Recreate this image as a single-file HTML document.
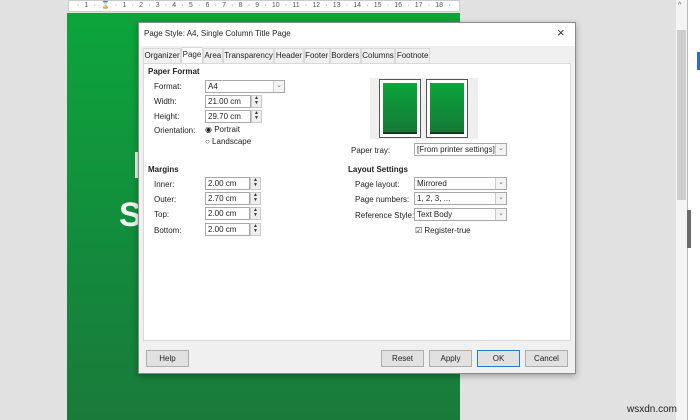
<!DOCTYPE html>
<html><head><meta charset="utf-8"><style>
*{box-sizing:border-box;margin:0;padding:0}
body{width:700px;height:420px;overflow:hidden;background:#e1e1e1;font-family:"Liberation Sans",sans-serif;font-size:8px;color:#222;position:relative}
.a{position:absolute;white-space:nowrap}
.in{position:absolute;background:#fff;border:1px solid #a8a8a8;height:13px;padding-left:2px;line-height:11px}
.sp{position:absolute;width:11px;height:13px;border:1px solid #c8c8c8;background:#eee;font-size:5px;line-height:5px;text-align:center;color:#333}
.dd{position:absolute;right:0;top:0;width:11px;height:11px;border-left:1px solid #ccc;background:#f3f3f3;color:#777;font-size:7px;text-align:center;line-height:10px}
.btn{position:absolute;top:350px;height:17px;width:43px;background:#e1e1e1;border:1px solid #adadad;text-align:center;line-height:15px}
b{font-weight:bold}
.tabs span{padding:0 0.5px;border:1px solid #d9d9d9;border-bottom:0}
</style></head><body>
<div class="a" style="left:68px;top:0;width:392px;height:12px;background:#fff;border:1px solid #ccc;font-size:7px;color:#555;line-height:10px;padding:0 8px;display:flex;justify-content:space-between"><span>·</span><span>1</span><span>·</span><span>⌛</span><span>·</span><span>1</span><span>·</span><span>2</span><span>·</span><span>3</span><span>·</span><span>4</span><span>·</span><span>5</span><span>·</span><span>6</span><span>·</span><span>7</span><span>·</span><span>8</span><span>·</span><span>9</span><span>·</span><span>10</span><span>·</span><span>11</span><span>·</span><span>12</span><span>·</span><span>13</span><span>·</span><span>14</span><span>·</span><span>15</span><span>·</span><span>16</span><span>·</span><span>17</span><span>·</span><span>18</span><span>·</span></div>
<div class="a" style="left:67px;top:13px;width:393px;height:407px;background:linear-gradient(#0ca53b,#138a3d 60%,#1a7a3a)"></div>
<div class="a" style="left:135px;top:152px;width:4px;height:26px;background:#e8f3ea"></div>
<div class="a" style="left:119px;top:196px;font-size:34px;font-weight:bold;color:#f2f2f2">S</div>
<div class="a" style="left:676px;top:0;width:11px;height:420px;background:#f4f4f4"></div>
<div class="a" style="left:677px;top:30px;width:9px;height:170px;background:#cdcdcd"></div>
<div class="a" style="left:678px;top:2px;font-size:7px;color:#555">^</div>
<div class="a" style="left:687px;top:0;width:13px;height:420px;background:#fff;border-left:1px solid #bbb"></div>
<div class="a" style="left:687px;top:210px;width:4px;height:38px;background:#6a6a6a"></div>
<div class="a" style="left:697px;top:52px;width:3px;height:18px;background:#2a6fc0"></div>
<div class="a" style="left:627px;top:404px;font-size:10px;color:#222">wsxdn.com</div>

<div class="a" style="left:138px;top:22px;width:438px;height:352px;background:#f0f0f0;border:1px solid #8a8a8a;box-shadow:0 2px 6px rgba(0,0,0,.3)">
<div class="a" style="left:0;top:0;width:436px;height:23px;background:#fff"></div>
<div class="a" style="left:5px;top:6px">Page Style: A4, Single Column Title Page</div>
<div class="a" style="left:418px;top:2px;font-size:13px;color:#333">×</div>
<div class="a" style="left:4px;top:40px;width:428px;height:278px;background:#fff;border:1px solid #d9d9d9"></div>
<div class="a tabs" style="left:4px;top:25px;height:15px;line-height:14px;display:flex">
<span>Organizer</span><span style="background:#fff;margin-top:-1px">Page</span><span>Area</span><span>Transparency</span><span>Header</span><span>Footer</span><span>Borders</span><span>Columns</span><span>Footnote</span></div>
</div>

<div class="a" style="left:148px;top:67px"><b>Paper Format</b></div>
<div class="a" style="left:154px;top:82px">Format:</div>
<div class="in" style="left:205px;top:80px;width:80px">A4<div class="dd">⌄</div></div>
<div class="a" style="left:154px;top:97px">Width:</div>
<div class="in" style="left:205px;top:95px;width:46px">21.00 cm</div><div class="sp" style="left:251px;top:95px">▲<br>▼</div>
<div class="a" style="left:154px;top:112px">Height:</div>
<div class="in" style="left:205px;top:110px;width:46px">29.70 cm</div><div class="sp" style="left:251px;top:110px">▲<br>▼</div>
<div class="a" style="left:154px;top:126px">Orientation:</div>
<div class="a" style="left:205px;top:125px">◉ Portrait</div>
<div class="a" style="left:205px;top:137px">○ Landscape</div>
<div class="a" style="left:148px;top:165px"><b>Margins</b></div>
<div class="a" style="left:154px;top:180px">Inner:</div>
<div class="in" style="left:205px;top:177px;width:45px">2.00 cm</div><div class="sp" style="left:250px;top:177px">▲<br>▼</div>
<div class="a" style="left:154px;top:195px">Outer:</div>
<div class="in" style="left:205px;top:192px;width:45px">2.70 cm</div><div class="sp" style="left:250px;top:192px">▲<br>▼</div>
<div class="a" style="left:154px;top:210px">Top:</div>
<div class="in" style="left:205px;top:207px;width:45px">2.00 cm</div><div class="sp" style="left:250px;top:207px">▲<br>▼</div>
<div class="a" style="left:154px;top:226px">Bottom:</div>
<div class="in" style="left:205px;top:223px;width:45px">2.00 cm</div><div class="sp" style="left:250px;top:223px">▲<br>▼</div>

<div class="a" style="left:370px;top:78px;width:108px;height:61px;background:#efefef"></div>
<div class="a" style="left:379px;top:79px;width:42px;height:59px;background:#fff;border:1px solid #555;padding:3px"><div style="width:100%;height:100%;background:linear-gradient(#0ba53b,#157a38);border-bottom:2px solid #0d3d1d"></div></div>
<div class="a" style="left:426px;top:79px;width:42px;height:59px;background:#fff;border:1px solid #555;padding:3px"><div style="width:100%;height:100%;background:linear-gradient(#0ba53b,#157a38);border-bottom:2px solid #0d3d1d"></div></div>
<div class="a" style="left:351px;top:146px">Paper tray:</div>
<div class="in" style="left:414px;top:143px;width:93px">[From printer settings]<div class="dd">⌄</div></div>
<div class="a" style="left:348px;top:165px"><b>Layout Settings</b></div>
<div class="a" style="left:355px;top:180px">Page layout:</div>
<div class="in" style="left:414px;top:177px;width:93px">Mirrored<div class="dd">⌄</div></div>
<div class="a" style="left:355px;top:195px">Page numbers:</div>
<div class="in" style="left:414px;top:192px;width:93px">1, 2, 3, ...<div class="dd">⌄</div></div>
<div class="a" style="left:355px;top:211px">Reference Style:</div>
<div class="in" style="left:414px;top:208px;width:93px">Text Body<div class="dd">⌄</div></div>
<div class="a" style="left:415px;top:226px">☑ Register-true</div>

<div class="btn" style="left:146px">Help</div>
<div class="btn" style="left:381px">Reset</div>
<div class="btn" style="left:429px">Apply</div>
<div class="btn" style="left:477px;border-color:#2a78c8">OK</div>
<div class="btn" style="left:525px">Cancel</div>
</body></html>
